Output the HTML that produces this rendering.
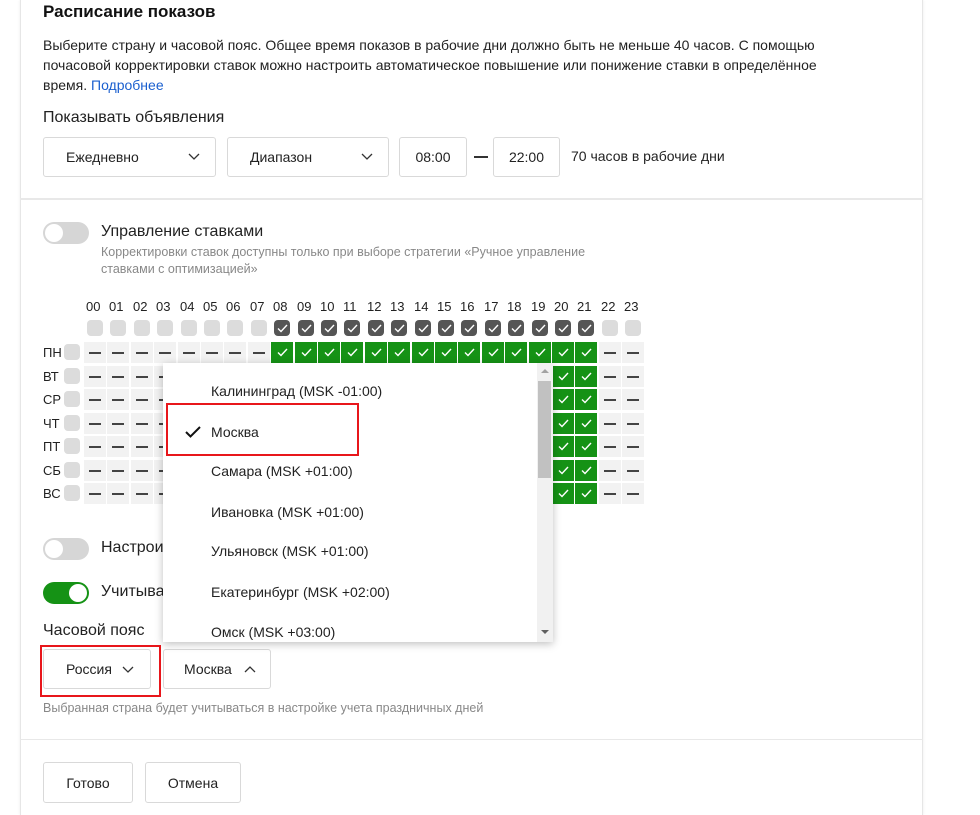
<!DOCTYPE html>
<html><head><meta charset="utf-8"><style>
*{box-sizing:border-box;margin:0;padding:0}
body{width:980px;height:815px;background:#fff;font-family:"Liberation Sans","Noto Sans CJK SC",sans-serif;color:#000;position:relative;overflow:hidden}
.a{position:absolute}
.panel{position:absolute;left:20px;top:0;width:903px;height:815px;border-left:1px solid #e6e6e6;border-right:1px solid #e6e6e6;box-shadow:0 0 3px rgba(0,0,0,.08)}
.btn{position:absolute;border:1px solid #d9d9d9;border-radius:3px;background:#fff;font-size:14px;color:#222;display:flex;align-items:center}
.cell{position:absolute;width:22px;height:21px;background:#f2f2f2;display:flex;align-items:center;justify-content:center}
.cell.g{background:#159215}
.dash{width:12px;height:2px;background:#444}
.hb{position:absolute;width:16px;height:16px;border-radius:4px;background:#dcdcdc}
.hb.d{background:#555}
.lbl{position:absolute;font-size:13px;color:#222}
.tog{position:absolute;width:46px;height:22px;border-radius:11px;background:#d6d6d6}
.tog::after{content:"";position:absolute;left:2px;top:2px;width:18px;height:18px;border-radius:50%;background:#fff}
.tog.on{background:#159215}.tog.on::after{left:26px}
.dd{position:absolute;left:163px;top:363px;width:390px;height:279px;background:#fff;box-shadow:0 2px 8px rgba(0,0,0,.25)}
.it{position:absolute;left:48px;font-size:14px;color:#222}
</style></head><body>
<div class="panel"></div>
<div class="a" style="left:43px;top:2px;font-size:17px;font-weight:bold;color:#111">Расписание показов</div>
<div class="a" style="left:43px;top:35px;font-size:14px;line-height:20px;color:#222;width:815px">Выберите страну и часовой пояс. Общее время показов в рабочие дни должно быть не меньше 40 часов. С помощью почасовой корректировки ставок можно настроить автоматическое повышение или понижение ставки в определённое время. <span style="color:#1a5fcf">Подробнее</span></div>
<div class="a" style="left:43px;top:109px;font-size:16px;color:#222">Показывать объявления</div>
<div class="btn" style="left:43px;top:137px;width:173px;height:40px;padding-left:22px">Ежедневно<svg class="a" style="left:144px;top:15px" width="12" height="8"><path d="M1 1l5 5 5-5" stroke="#333" fill="none" stroke-width="1.3"/></svg></div>
<div class="btn" style="left:227px;top:137px;width:162px;height:40px;padding-left:22px">Диапазон<svg class="a" style="left:133px;top:15px" width="12" height="8"><path d="M1 1l5 5 5-5" stroke="#333" fill="none" stroke-width="1.3"/></svg></div>
<div class="btn" style="left:399px;top:137px;width:68px;height:40px;justify-content:center">08:00</div>
<div class="a" style="left:474px;top:156px;width:14px;height:2px;background:#333"></div>
<div class="btn" style="left:493px;top:137px;width:67px;height:40px;justify-content:center">22:00</div>
<div class="a" style="left:571px;top:148px;font-size:14px;color:#222">70 часов в рабочие дни</div>
<div class="a" style="left:20px;top:198px;width:903px;height:2px;background:#e8e8e8"></div>
<div class="tog" style="left:43px;top:222px"></div>
<div class="a" style="left:101px;top:223px;font-size:16px;color:#222">Управление ставками</div>
<div class="a" style="left:101px;top:244px;font-size:12.5px;line-height:17px;color:#888;width:535px">Корректировки ставок доступны только при выборе стратегии «Ручное управление ставками с оптимизацией»</div>
<div id="grid"></div>
<div class="tog" style="left:43px;top:538px"></div>
<div class="a" style="left:101px;top:539px;font-size:16px;color:#222">Настрои</div>
<div class="tog on" style="left:43px;top:582px"></div>
<div class="a" style="left:101px;top:583px;font-size:16px;color:#222">Учитыва</div>
<div class="a" style="left:43px;top:622px;font-size:16px;color:#222">Часовой пояс</div>
<div class="a" style="left:40px;top:645px;width:121px;height:52px;border:2px solid #e8161b"></div>
<div class="btn" style="left:43px;top:649px;width:108px;height:40px;padding-left:22px">Россия<svg class="a" style="left:78px;top:16px" width="12" height="8"><path d="M1 1l5 5 5-5" stroke="#333" fill="none" stroke-width="1.3"/></svg></div>
<div class="btn" style="left:163px;top:649px;width:108px;height:40px;padding-left:20px">Москва<svg class="a" style="left:80px;top:15px" width="12" height="8"><path d="M1 7l5-5 5 5" stroke="#333" fill="none" stroke-width="1.3"/></svg></div>
<div class="a" style="left:43px;top:701px;font-size:12.5px;color:#888">Выбранная страна будет учитываться в настройке учета праздничных дней</div>
<div class="a" style="left:20px;top:739px;width:903px;height:1px;background:#e8e8e8"></div>
<div class="btn" style="left:43px;top:762px;width:90px;height:41px;justify-content:center">Готово</div>
<div class="btn" style="left:145px;top:762px;width:96px;height:41px;justify-content:center">Отмена</div>
<div class="dd">
<div class="it" style="top:20px">Калининград (MSK -01:00)</div>
<svg class="a" style="left:22px;top:63px" width="16" height="12"><path d="M1 6l4.5 4.5L15 1" stroke="#111" fill="none" stroke-width="2"/></svg>
<div class="it" style="top:61px">Москва</div>
<div class="it" style="top:100px">Самара (MSK +01:00)</div>
<div class="it" style="top:141px">Ивановка (MSK +01:00)</div>
<div class="it" style="top:180px">Ульяновск (MSK +01:00)</div>
<div class="it" style="top:221px">Екатеринбург (MSK +02:00)</div>
<div class="it" style="top:261px">Омск (MSK +03:00)</div>
<div class="a" style="left:374px;top:0;width:16px;height:279px;background:#f1f1f1"></div>
<div class="a" style="left:375px;top:18px;width:13px;height:97px;background:#c1c1c1"></div>
<svg class="a" style="left:377px;top:5px" width="10" height="6"><path d="M1 5l4-4 4 4z" fill="#a3a3a3"/></svg>
<svg class="a" style="left:377px;top:266px" width="10" height="6"><path d="M1 1l4 4 4-4z" fill="#606060"/></svg>
</div>
<div class="a" style="left:166px;top:403px;width:193px;height:53px;border:2px solid #e8161b"></div>
<script>
var g='',days=['ПН','ВТ','СР','ЧТ','ПТ','СБ','ВС'];
var ck='<svg width="11" height="9"><path d="M1 4.5l3 3L10 1" stroke="#fff" fill="none" stroke-width="1.4"/></svg>';
for(var i=0;i<24;i++){var x=Math.round(84+i*23.4);var s=(i<10?'0':'')+i;
g+='<div class="lbl" style="left:'+(x+2)+'px;top:299px">'+s+'</div>';
var on=i>=8&&i<=21;
g+='<div class="hb'+(on?' d':'')+'" style="left:'+(x+3)+'px;top:320px;display:flex;align-items:center;justify-content:center">'+(on?ck:'')+'</div>';
for(var r=0;r<7;r++){var y=Math.round(342+r*23.5);var gr=on&&(r==0||i>=20);
g+='<div class="cell'+(gr?' g':'')+'" style="left:'+x+'px;top:'+y+'px">'+(gr?ck:'<div class="dash"></div>')+'</div>';}}
for(var r=0;r<7;r++){var y=Math.round(342+r*23.5);g+='<div class="lbl" style="left:43px;top:'+(y+3)+'px">'+days[r]+'</div><div class="hb" style="left:64px;top:'+(y+2)+'px"></div>';}
document.getElementById('grid').innerHTML=g;
</script>
</body></html>
